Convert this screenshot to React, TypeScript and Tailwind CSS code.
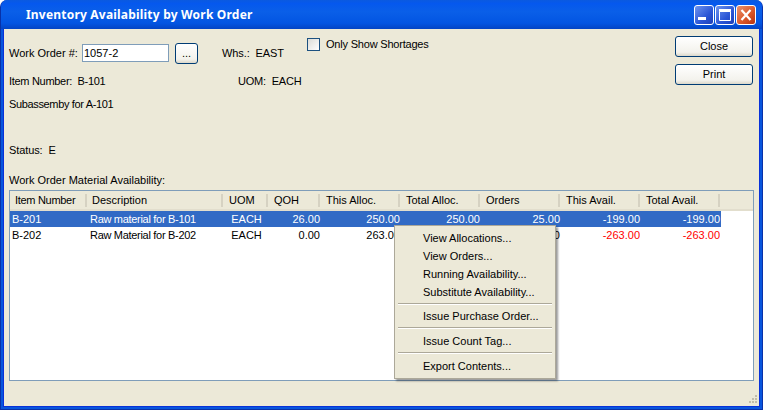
const columns = [
  { label: "Item Number", width: "w-[77px] pl-[5px] tracking-[-0.3px]" },
  { label: "Description", width: "w-[136px] pl-[5px]" },
  { label: "UOM", width: "w-[45px] pl-[6px]" },
  { label: "QOH", width: "w-[52px] pl-[6px]" },
  { label: "This Alloc.", width: "w-[80px] pl-[6px]" },
  { label: "Total Alloc.", width: "w-[80px] pl-[6px]" },
  { label: "Orders", width: "w-[80px] pl-[6px]" },
  { label: "This Avail.", width: "w-[80px] pl-[6px]" },
  { label: "Total Avail.", width: "w-[80px] pl-[6px]" },
];

const rows = [
  {
    item: "B-201",
    desc: "Raw material for B-101",
    qoh: "26.00",
    thisAlloc: "250.00",
    totalAlloc: "250.00",
    orders: "25.00",
    thisAvail: "-199.00",
    totalAvail: "-199.00",
    selected: true,
  },
  {
    item: "B-202",
    desc: "Raw Material for B-202",
    qoh: "0.00",
    thisAlloc: "263.00",
    totalAlloc: "263.00",
    orders: "0.00",
    thisAvail: "-263.00",
    totalAvail: "-263.00",
    selected: false,
  },
];

function Separator({ first }: { first?: boolean }) {
  return (
    <div className={`mx-[3px] mt-[2px] h-[2px] border-t border-b border-t-[#aca899] border-b-white ${first ? "mb-[2px]" : "mb-[3px]"}`} />
  );
}

function MenuItem({ label }: { label: string }) {
  return <div className="flex h-[18px] items-center pl-[28px]">{label}</div>;
}

function XpButton({ label, className }: { label: string; className: string }) {
  return (
    <button className={`flex items-center justify-center rounded-[3px] border border-[#003c74] bg-[linear-gradient(#ffffff,#f3f2ec_80%,#dcd8ca)] text-black ${className}`}>
      {label}
    </button>
  );
}

function TitleButtons() {
  return (
    <div className="flex items-center gap-[1px] pr-[6px] pt-[1px]">
      <div className="flex h-[20px] w-[20px] items-center justify-center rounded-[3px] border border-white bg-[linear-gradient(135deg,#6f95ee,#2a55d6_60%,#1c3fb8)]">
        <svg width="18" height="18" viewBox="0 0 18 18">
          <rect x="3" y="11" width="8" height="3" fill="white" />
        </svg>
      </div>
      <div className="flex h-[20px] w-[20px] items-center justify-center rounded-[3px] border border-white bg-[linear-gradient(135deg,#6f95ee,#2a55d6_60%,#1c3fb8)]">
        <svg width="18" height="18" viewBox="0 0 18 18">
          <path d="M3.5 5.5h11v9h-11z" fill="none" stroke="white" />
          <rect x="3" y="3" width="12" height="2.5" fill="white" />
        </svg>
      </div>
      <div className="flex h-[20px] w-[20px] items-center justify-center rounded-[3px] border border-white bg-[linear-gradient(135deg,#e8936f,#dc5a2c_55%,#b8320f)]">
        <svg width="18" height="18" viewBox="0 0 18 18">
          <path d="M4.5 4l9 10M13.5 4l-9 10" stroke="white" strokeWidth="2.2" fill="none" />
        </svg>
      </div>
    </div>
  );
}

export default function App() {
  return (
    <div className="flex h-[410px] w-[763px] flex-col overflow-hidden rounded-t-[7px] border-x border-b border-[#0831a8] bg-[#0855dd] font-['Liberation_Sans',sans-serif] text-[11px] leading-none text-black">
      {/* title bar */}
      <div className="flex h-[29px] shrink-0 items-center justify-between bg-[linear-gradient(#0a5ae0,#0558ee_12%,#0a5fe8_40%,#0355e2_80%,#0344c4)] pl-[25px]">
        <span className="font-['Noto_Sans',sans-serif] text-[12px] font-bold tracking-[0.2px] text-white">Inventory Availability by Work Order</span>
        <TitleButtons />
      </div>

      <div className="mx-[2px] mb-[2px] flex min-h-0 flex-1 flex-col border-x border-b border-[#0831d9] bg-[#ece9d8] pl-[5px] pr-[5px]">
        {/* form header */}
        <div className="flex h-[143px] shrink-0 justify-between">
          <div className="flex flex-col">
            <div className="mt-[13px] flex h-[22px] items-center">
              <span className="w-[73px] whitespace-nowrap">Work Order #:</span>
              <div className="flex h-[18px] w-[87px] items-center border border-[#7f9db9] bg-white pl-[1px]">1057-2</div>
              <XpButton label="..." className="ml-[6px] h-[21px] w-[23px]" />
              <span className="ml-[24px] w-[85px] tracking-[-0.1px]">Whs.:&nbsp; EAST</span>
              <div className="mb-[17px] flex items-center">
                <div className="h-[13px] w-[13px] border border-[#1c5180] bg-[linear-gradient(135deg,#dcdcd7,#ffffff)]" />
                <span className="ml-[6px] tracking-[-0.2px]">Only Show Shortages</span>
              </div>
            </div>
            <div className="mt-[10px] flex h-[14px] items-center">
              <span className="w-[229px] tracking-[-0.3px]">Item Number:&nbsp; B-101</span>
              <span className="tracking-[-0.2px]">UOM:&nbsp; EACH</span>
            </div>
            <div className="mt-[9px] flex h-[14px] items-center tracking-[-0.35px]">Subassemby for A-101</div>
            <div className="mt-[32px] flex h-[14px] items-center tracking-[-0.1px]">Status:&nbsp; E</div>
          </div>
          <div className="flex flex-col gap-[7px] pr-[1px] pt-[7px]">
            <XpButton label="Close" className="h-[21px] w-[78px]" />
            <XpButton label="Print" className="h-[21px] w-[78px]" />
          </div>
        </div>

        <div className="flex h-[16px] shrink-0 items-center">Work Order Material Availability:</div>

        {/* table */}
        <div className="relative mt-[2px] h-[191px] shrink-0 border border-[#7f9db9] bg-white">
          <div className="flex h-[20px] items-start border-b-2 border-b-[#e2decd] bg-[#ece9d8]">
            {columns.map((col) => (
              <div key={col.label} className={`mt-[3px] flex h-[13px] items-center border-r-2 border-r-[#d6d2c2] ${col.width}`}>
                {col.label}
              </div>
            ))}
          </div>
          {rows.map((row) => (
            <div key={row.item} className={`flex h-[16px] w-[711px] items-center ${row.selected ? "bg-[#316ac5] text-white" : ""}`}>
              <span className="w-[77px] pl-[2px]">{row.item}</span>
              <span className="w-[136px] pl-[3px] tracking-[-0.3px]">{row.desc}</span>
              <span className="w-[45px] pl-[2px] text-center">EACH</span>
              <span className="w-[52px] text-right">{row.qoh}</span>
              <span className="w-[80px] text-right">{row.thisAlloc}</span>
              <span className="w-[80px] text-right">{row.totalAlloc}</span>
              <span className="w-[80px] text-right">{row.orders}</span>
              <span className={`w-[80px] text-right ${row.selected ? "" : "text-[#ff0000]"}`}>{row.thisAvail}</span>
              <span className={`w-[80px] text-right ${row.selected ? "" : "text-[#ff0000]"}`}>{row.totalAvail}</span>
            </div>
          ))}

          {/* context menu */}
          <div className="absolute left-[384px] top-[34px] w-[162px] border border-[#aca899] bg-[#ece9d8] py-[3px] shadow-[2px_2px_2px_rgba(0,0,0,0.4)]">
            <MenuItem label="View Allocations..." />
            <MenuItem label="View Orders..." />
            <MenuItem label="Running Availability..." />
            <MenuItem label="Substitute Availability..." />
            <Separator first />
            <MenuItem label="Issue Purchase Order..." />
            <Separator />
            <MenuItem label="Issue Count Tag..." />
            <Separator />
            <MenuItem label="Export Contents..." />
          </div>
        </div>

        {/* resize grip */}
        <div className="-mr-[4px] flex flex-1 items-end justify-end">
          <svg width="12" height="12" viewBox="0 0 12 12" fill="#c1bdab">
            <rect x="9" y="1" width="2" height="2" />
            <rect x="6" y="4" width="2" height="2" />
            <rect x="9" y="4" width="2" height="2" />
            <rect x="3" y="7" width="2" height="2" />
            <rect x="6" y="7" width="2" height="2" />
            <rect x="9" y="7" width="2" height="2" />
          </svg>
        </div>
      </div>
    </div>
  );
}
